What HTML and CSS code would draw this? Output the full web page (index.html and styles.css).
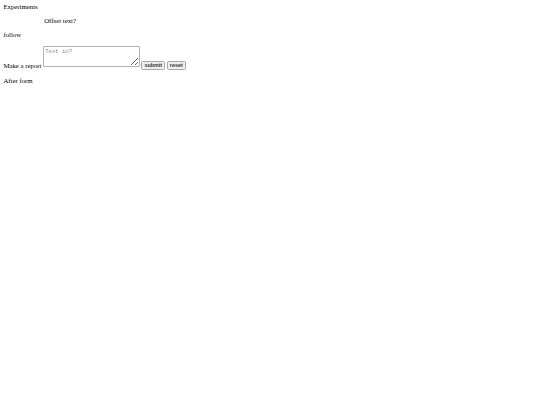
FILE: index.html
```html
<!DOCTYPE html>
<html>
<head>
<link rel="stylesheet" href="styles.css">
</head>
<body>
<div class="title">Experiments</div>
<p class="offset">Offset text?</p>
<p>follow</p>
<form class="report">Make a report <textarea class="box" placeholder="Text in?"></textarea> <input class="btn" type="submit" value="submit"> <input class="btn" type="reset" value="reset"></form>
<p>After form</p>
</body>
</html>
```
FILE: styles.css
```css
body {
  margin: 3.4px;
  font-family: "Liberation Serif", serif;
  font-size: 6.8px;
  color: #000;
}
p { margin: 6.8px 0; }
.offset { padding-left: 40.8px; }
.box {
  box-sizing: border-box;
  width: 96.5px;
  height: 21.5px;
  margin: 1px 0 0;
  padding: 1px;
  border: 1px solid #b4b4b4;
  border-radius: 1px;
  font-family: "Liberation Mono", monospace;
  font-size: 5.6px;
  vertical-align: baseline;
  resize: both;
}
.box::placeholder { color: #8a8a8a; }
.btn {
  margin: 0;
  padding: 0.5px 2px;
  border: 1px solid #a8a8a8;
  border-radius: 1.5px;
  background: #efefef;
  color: #333;
  font-family: "Liberation Sans", Arial, sans-serif;
  font-size: 5.4px;
  font-weight: 600;
  line-height: 6.5px;
}
```
